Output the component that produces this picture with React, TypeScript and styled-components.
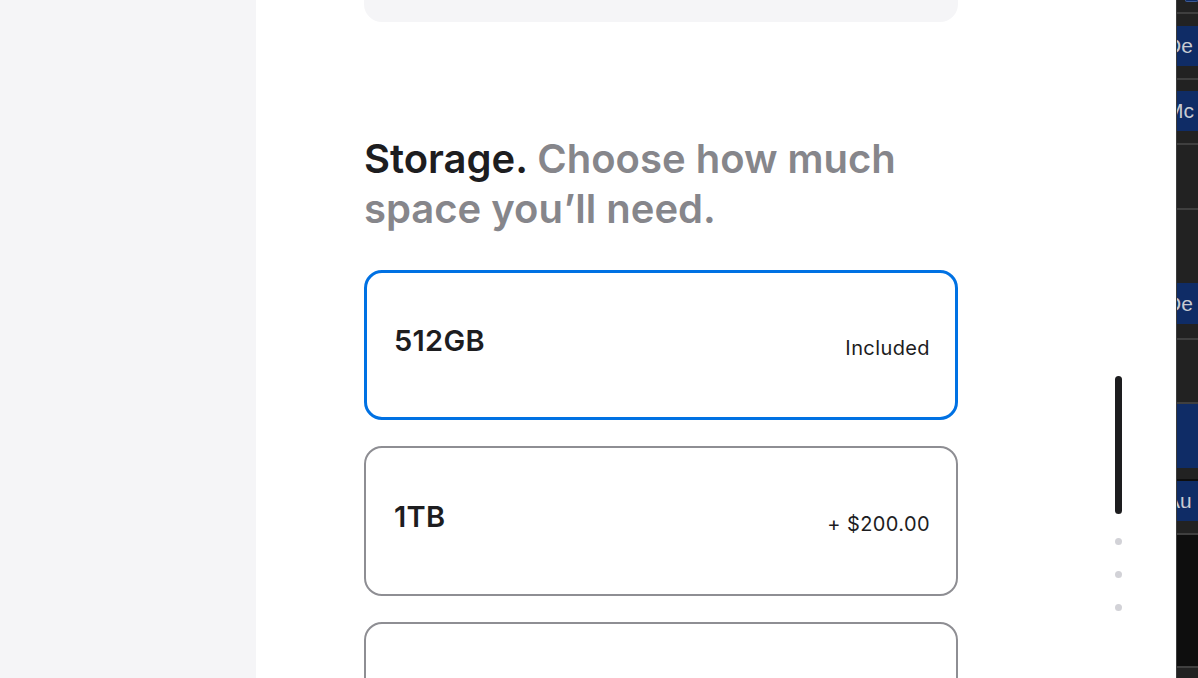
import React from "react";
import styled, { createGlobalStyle } from "styled-components";

const Global = createGlobalStyle`
  html, body { margin: 0; padding: 0; height: 678px; overflow: hidden; }
  body { font-family: Inter, "Noto Sans", "Liberation Sans", sans-serif; -webkit-font-smoothing: antialiased; }
  #root { height: 678px; }
`;

const Page = styled.div`
  display: flex;
  width: 1198px;
  height: 678px;
  overflow: hidden;
`;

const LeftPanel = styled.aside`
  width: 256px;
  flex: none;
  background: #f5f5f7;
`;

const Main = styled.main`
  position: relative;
  flex: 1;
  background: #ffffff;
  padding-left: 108px;
  overflow: hidden;
`;

const Column = styled.div`
  width: 594px;
  display: flex;
  flex-direction: column;
`;

const TopPanel = styled.div`
  height: 22px;
  background: #f5f5f7;
  border-radius: 0 0 18px 18px;
`;

const Heading = styled.h2`
  margin: 112px 0 36px;
  font-size: 40px;
  line-height: 50px;
  font-weight: 600;
  letter-spacing: 0px;
  color: #86868b;
`;

const Strong = styled.span`
  color: #1d1d1f;
`;

const Options = styled.div`
  display: flex;
  flex-direction: column;
  gap: 26px;
`;

const Option = styled.div<{ $selected?: boolean }>`
  box-sizing: border-box;
  height: 150px;
  border-radius: 18px;
  border: ${(p) => (p.$selected ? "3px solid #0071e3" : "2px solid #8e8e93")};
  padding: ${(p) => (p.$selected ? "51px 25px 0 27px" : "52px 26px 0 28px")};
  display: flex;
  align-items: baseline;
  justify-content: space-between;
`;

const Label = styled.span`
  font-size: 29px;
  font-weight: 600;
  color: #1d1d1f;
  letter-spacing: 0.3px;
  line-height: 34px;
`;

const Price = styled.span`
  font-size: 20px;
  color: #1d1d1f;
  letter-spacing: 0.4px;
  position: relative;
  top: 4px;
`;

const ScrollIndicator = styled.div`
  position: absolute;
  left: 859px;
  top: 376px;
  display: flex;
  flex-direction: column;
  align-items: center;
`;

const Thumb = styled.div`
  width: 7px;
  height: 138px;
  border-radius: 4px;
  background: #1d1d1f;
  margin-bottom: 24px;
`;

const Dot = styled.div`
  width: 7px;
  height: 7px;
  border-radius: 50%;
  background: #d2d2d7;
  margin-bottom: 26px;
`;

const Strip = styled.div`
  width: 22px;
  flex: none;
  background: #222222;
  border-left: 1px solid #3c3c3c;
  box-sizing: border-box;
  display: flex;
  flex-direction: column;
  overflow: hidden;
`;

const Cell = styled.div<{ $h: number; $kind: "dark" | "blue" | "black"; $top?: boolean }>`
  height: ${(p) => p.$h}px;
  flex: none;
  box-sizing: border-box;
  overflow: hidden;
  background: ${(p) =>
    p.$kind === "blue" ? "#0f2c66" : p.$kind === "black" ? "#0e0e0e" : "#222222"};
  border-top: ${(p) => (p.$top ? "2px solid #3f3f3f" : "none")};
  color: #c8cbd2;
  font-family: "Liberation Sans", Arial, sans-serif;
  font-size: 21px;
  line-height: ${(p) => p.$h}px;
  white-space: nowrap;
  text-indent: -11px;
`;

const TopTab = styled.div`
  height: 4px;
  margin-left: 8px;
  background: #0f2c66;
  border: 1px solid #3d5a94;
  border-top: none;
  border-radius: 0 0 4px 4px;
`;

const options = [
  { label: "512GB", price: "Included", selected: true },
  { label: "1TB", price: "+ $200.00" },
  { label: "", price: "" },
];

export default function App() {
  return (
    <>
      <Global />
      <Page>
        <LeftPanel />
        <Main>
          <Column>
            <TopPanel />
            <Heading>
              <Strong>Storage.</Strong> Choose how much space you’ll need.
            </Heading>
            <Options>
              {options.map((o, i) => (
                <Option key={i} $selected={o.selected}>
                  <Label>{o.label}</Label>
                  <Price>{o.price}</Price>
                </Option>
              ))}
            </Options>
          </Column>
          <ScrollIndicator>
            <Thumb />
            <Dot />
            <Dot />
            <Dot />
          </ScrollIndicator>
        </Main>
        <Strip>
          <TopTab />
          <Cell $h={10} $kind="dark" />
          <Cell $h={14} $kind="dark" $top />
          <Cell $h={40} $kind="blue">De</Cell>
          <Cell $h={12} $kind="dark" />
          <Cell $h={13} $kind="dark" $top />
          <Cell $h={40} $kind="blue">Mc</Cell>
          <Cell $h={12} $kind="dark" />
          <Cell $h={65} $kind="dark" $top />
          <Cell $h={75} $kind="dark" $top />
          <Cell $h={41} $kind="blue">De</Cell>
          <Cell $h={14} $kind="dark" />
          <Cell $h={64} $kind="dark" $top />
          <Cell $h={66} $kind="blue" $top />
          <Cell $h={11} $kind="dark" />
          <Cell $h={2} $kind="black" />
          <Cell $h={40} $kind="blue">Au</Cell>
          <Cell $h={12} $kind="dark" />
          <Cell $h={133} $kind="black" $top />
          <Cell $h={12} $kind="dark" $top />
        </Strip>
      </Page>
    </>
  );
}
